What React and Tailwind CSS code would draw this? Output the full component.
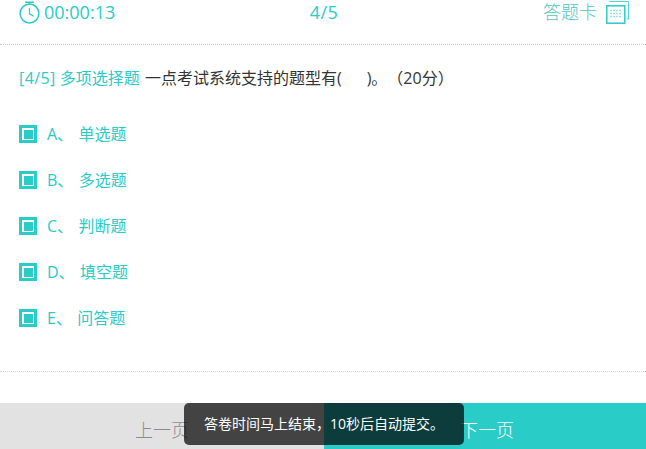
export default function App() {
  const options = [
    ["A、", "单选题"],
    ["B、", "多选题"],
    ["C、", "判断题"],
    ["D、", "填空题"],
    ["E、", "问答题"],
  ];
  return (
    <div className="relative flex h-[449px] w-[646px] flex-col overflow-hidden bg-white font-['Open_Sans','Noto_Sans_CJK_SC',sans-serif] text-[#2accc8] [text-spacing-trim:space-all]">
      <header className="flex h-[45px] items-start justify-between border-b border-dotted border-[#c8c8c8] pl-[19px] pr-[17px]">
        <div className="flex w-[200px] items-center gap-[4px] text-[18px] leading-[24px]">
          <svg width="21" height="23" viewBox="0 0 21 23" fill="none" stroke="#2accc8" strokeWidth="1.5">
            <circle cx="10.5" cy="12.5" r="9.4" />
            <path d="M6 1.2h9M10.5 1.2v2" />
            <path d="M10.5 7v5.8l4.2 2.4" strokeWidth="1.2" />
          </svg>
          <span>00:00:13</span>
        </div>
        <div className="text-[18px] leading-[24px] tracking-[0.5px]">4/5</div>
        <div className="flex w-[200px] items-start justify-end gap-[9px]">
          <span className="text-[18px] font-light leading-[24px] text-[#4fc4c1]">答题卡</span>
          <svg width="23" height="23" viewBox="0 0 23 23" fill="none" className="mt-px" stroke="#2accc8">
            <path d="M3.5 0.5h19v17.5h-2" strokeOpacity="0.8" />
            <rect x="0.8" y="4.8" width="18" height="17.4" strokeWidth="1.5" />
            <path d="M4 9.5h12M4 12.5h12M4 15.5h12" strokeWidth="1.6" strokeDasharray="2 1" strokeOpacity="0.5" />
          </svg>
        </div>
      </header>
      <main className="flex flex-1 flex-col border-b border-dotted border-[#d2d2d2] pl-[19px]">
        <p className="mt-[21px] text-[16px] leading-[24px]">
          <span className="text-[#2accc8] tracking-[0.4px]">[4/5]</span>
          <span className="text-[#2accc8]"> 多项选择题</span>
          <span className="[word-spacing:1px]"> </span>
          <span className="text-[#333333]">一点考试系统支持的题型有(&nbsp;&nbsp;&nbsp;&nbsp;&nbsp;&nbsp;)。（20分）</span>
        </p>
        <ul className="mt-[32px] flex flex-col gap-[22px]">
          {options.map(([key, label]) => (
            <li key={key} className="flex h-[24px] items-center text-[16px] leading-[24px] text-[#2accc8]">
              <span className="flex h-[18px] w-[18px] items-center justify-center border-[3px] border-[#2accc8] bg-white">
                <span className="h-[9px] w-[9px] bg-[#2accc8]" />
              </span>
              <span className="ml-[10px] whitespace-pre [word-spacing:-1.5px]">{key}  {label}</span>
            </li>
          ))}
        </ul>
      </main>
      <footer className="mt-[31px] flex h-[46px] text-[18px] font-light">
        <button className="flex w-[324px] items-center justify-center bg-[#e2e2e2] pt-[9px] text-[#8c8c8c]">上一页</button>
        <button className="flex w-[322px] items-center justify-center bg-[#2accc8] pl-[4px] pt-[9px] text-white">下一页</button>
      </footer>
      <div className="absolute left-[184px] top-[403px] flex h-[42px] w-[280px] items-center justify-center rounded-[5px] bg-black/70 pb-[2px] text-[14px] text-white">
        答卷时间马上结束，10秒后自动提交。
      </div>
    </div>
  );
}
